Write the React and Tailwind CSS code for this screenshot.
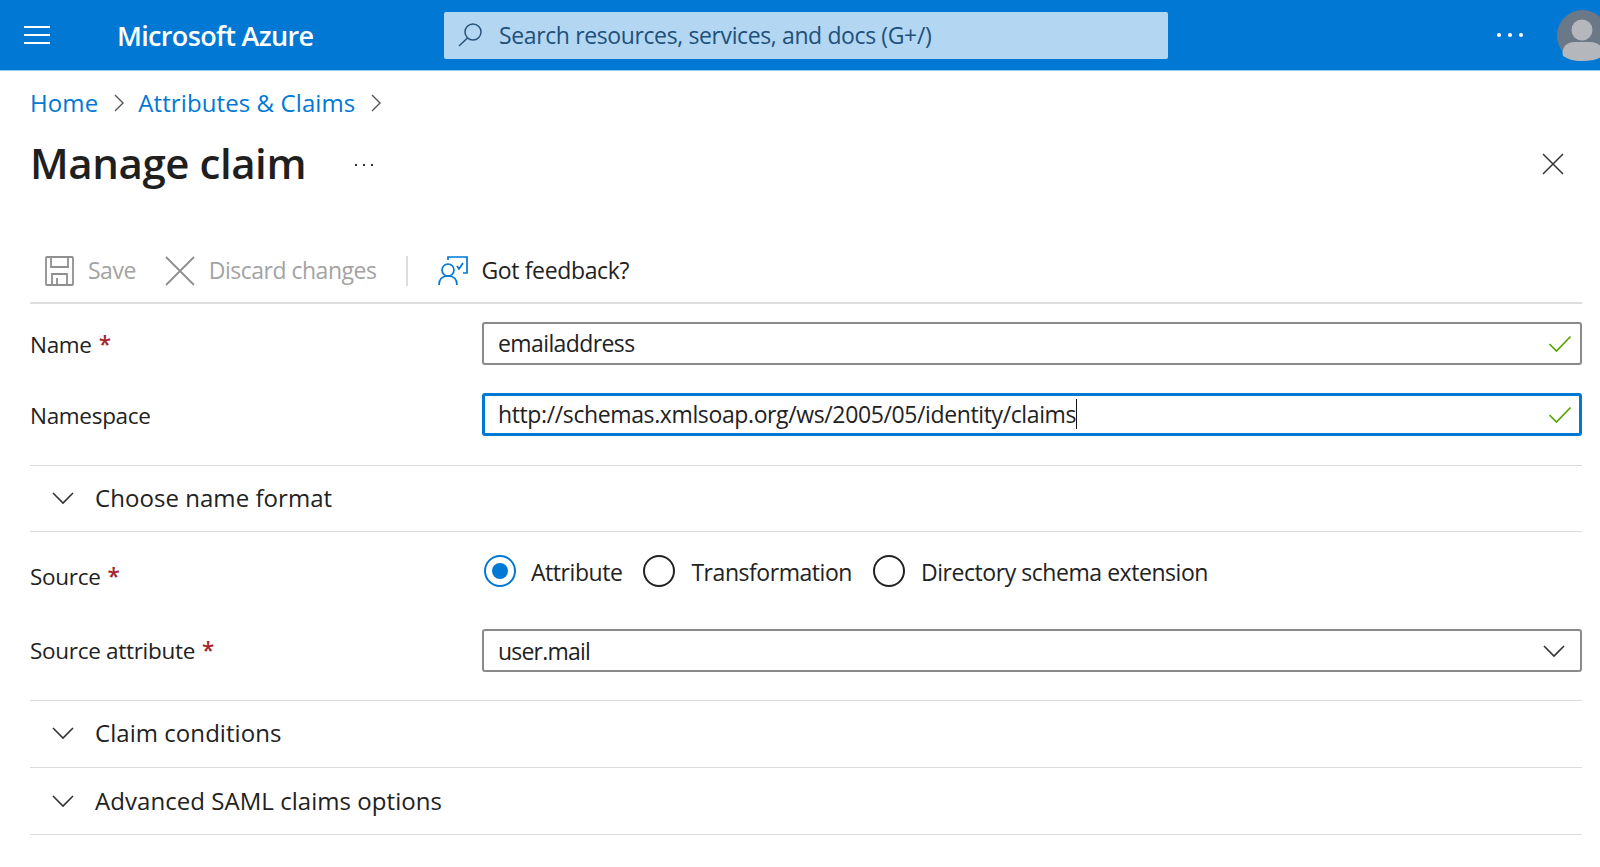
import React from "react";

const font = "font-['Open_Sans','Noto_Sans',sans-serif]";

function Chevron() {
  return (
    <svg width="24" height="14" viewBox="0 0 24 14" fill="none" stroke="#333" strokeWidth="1.6" className="shrink-0">
      <path d="M2 2l10 10L22 2" />
    </svg>
  );
}

function Section({ title, className = "" }) {
  return (
    <div className={`flex items-center gap-[20px] border-b border-[#dcdcdc] pl-[21px] ${className}`}>
      <Chevron />
      <span className="text-[24px] tracking-[0.05px] text-[#222]">{title}</span>
    </div>
  );
}

function Label({ text, req }) {
  return (
    <span className="text-[22.5px] tracking-[-0.3px] text-[#222]">
      {text}
      {req && <span className="ml-[7px] font-semibold text-[#a4262c]">*</span>}
    </span>
  );
}

function Check() {
  return (
    <svg width="24" height="18" viewBox="0 0 24 18" fill="none" stroke="#57a300" strokeWidth="1.7" className="shrink-0">
      <path d="M1.5 9l7 7L22.5 1.5" />
    </svg>
  );
}

function Radio({ label, on, className = "" }) {
  return (
    <div className={`flex items-center ${on ? "gap-[15px]" : "gap-[16px]"} ${className}`}>
      <span className={`mb-[2px] flex h-[32px] w-[32px] items-center justify-center rounded-full border-2 ${on ? "border-[#0078d4]" : "border-[#222]"}`}>
        {on && <span className="h-[16px] w-[16px] rounded-full bg-[#0078d4]" />}
      </span>
      <span className="text-[23px] tracking-[-0.45px] text-[#222]">{label}</span>
    </div>
  );
}

export default function App() {
  return (
    <div className={`${font} h-[867px] w-[1600px] overflow-hidden bg-white`}>
      <header className="flex h-[71px] items-center border-b border-[#9cc8ee] bg-[#0078d4]">
        <svg width="26" height="18" viewBox="0 0 26 18" stroke="#fff" strokeWidth="2" className="mb-[1px] ml-[24px] shrink-0">
          <path d="M0 1h26M0 9h26M0 17h26" />
        </svg>
        <span className="ml-[67px] w-[327px] pt-[3px] text-[27px] font-semibold tracking-[-0.65px] text-white">Microsoft Azure</span>
        <div className="flex h-[47px] w-[724px] items-center gap-[16px] rounded-[2px] bg-[#b3d7f2] pl-[13px]">
          <svg width="26" height="26" viewBox="0 0 26 26" fill="none" stroke="#27527a" strokeWidth="1.5" className="shrink-0">
            <circle cx="16" cy="10" r="8" />
            <path d="M10.500 16L2 24" />
          </svg>
          <span className="text-[23px] tracking-[-0.38px] text-[#21507a]">Search resources, services, and docs (G+/)</span>
        </div>
        <div className="ml-[329px] flex gap-[7px]">
          <span className="h-[4px] w-[4px] rounded-full bg-white" />
          <span className="h-[4px] w-[4px] rounded-full bg-white" />
          <span className="h-[4px] w-[4px] rounded-full bg-white" />
        </div>
        <div className="ml-[34px] flex-1 overflow-hidden">
          <svg width="50" height="51" viewBox="0 0 50 51" className="block">
            <circle cx="25.500" cy="25.500" r="25.500" fill="#6b7887" />
            <circle cx="25" cy="20" r="10.500" fill="#b4b8bc" />
            <path d="M6 46c-2-8 3-14 12-14h15c9 0 15 6 13 14-5 3.500-12 5-21 5s-14-2-19-5z" fill="#b4b8bc" />
          </svg>
        </div>
      </header>

      <main className="px-[30px] pr-[18px]">
        <nav className="flex h-[64px] items-center text-[24px] tracking-[0.1px] text-[#0078d4]">
          <span>Home</span>
          <svg width="11" height="18" viewBox="0 0 11 18" fill="none" stroke="#555" strokeWidth="1.4" className="ml-[16px] mr-[13px]"><path d="M1 1l8 8-8 8" /></svg>
          <span>Attributes &amp; Claims</span>
          <svg width="11" height="18" viewBox="0 0 11 18" fill="none" stroke="#555" strokeWidth="1.4" className="ml-[16px]"><path d="M1 1l8 8-8 8" /></svg>
        </nav>

        <div className="flex h-[55px] items-center">
          <h1 className="text-[42px] font-semibold tracking-[-0.43px] text-[#1f1f1f]">Manage claim</h1>
          <div className="ml-[49px] mt-[4px] flex gap-[6px]">
            <span className="h-[2px] w-[2px] bg-[#333]" />
            <span className="h-[2px] w-[2px] bg-[#333]" />
            <span className="h-[2px] w-[2px] bg-[#333]" />
          </div>
          <svg width="22" height="22" viewBox="0 0 22 22" stroke="#333" strokeWidth="1.5" className="ml-auto mr-[18px] mt-[2px]">
            <path d="M1 1l20 20M21 1L1 21" />
          </svg>
        </div>

        <div className="mt-[52px] flex h-[62px] items-center border-b-2 border-[#dedede] pb-[3px] pl-[15px]">
          <svg width="29" height="30" viewBox="0 0 29 30" fill="none" stroke="#8f8f8f" strokeWidth="1.8">
            <path d="M2 1h25a1 1 0 011 1v26a1 1 0 01-1 1H2a1 1 0 01-1-1V2a1 1 0 011-1z" />
            <path d="M6 1v10h17V1M7 29V18h15v11M12 22v7" />
          </svg>
          <span className="ml-[14px] text-[23px] tracking-[-0.5px] text-[#a3a3a3]">Save</span>
          <svg width="30" height="30" viewBox="0 0 30 30" stroke="#8f8f8f" strokeWidth="1.8" className="ml-[29px]">
            <path d="M1 1l28 28M29 1L1 29" />
          </svg>
          <span className="ml-[14px] text-[23px] tracking-[-0.5px] text-[#a3a3a3]">Discard changes</span>
          <span className="ml-[30px] h-[30px] w-[2px] bg-[#dedede]" />
          <svg width="30" height="30" viewBox="0 0 30 30" fill="none" stroke="#0078d4" strokeWidth="1.7" className="ml-[30px]">
            <path d="M10 4V1h19v16h-4" />
            <path d="M19 10l2 3 4-6" />
            <circle cx="10" cy="14" r="6" />
            <path d="M1 29c0-6 3-9 9-9s9 3 9 9" />
          </svg>
          <span className="ml-[13px] text-[23px] tracking-[-0.35px] text-[#222]">Got feedback?</span>
        </div>

        <div className="mt-[18px] flex h-[43px] items-center">
          <div className="w-[452px] pt-[2px]"><Label text="Name" req /></div>
          <div className="flex h-full flex-1 items-center justify-between rounded-[3px] border-2 border-[#8a8a8a] pl-[14px] pr-[8px]">
            <span className="text-[23px] tracking-[-0.6px] text-[#222]">emailaddress</span>
            <Check />
          </div>
        </div>

        <div className="mt-[28px] flex h-[43px] items-center">
          <div className="w-[452px] pt-[2px]"><Label text="Namespace" /></div>
          <div className="flex h-full flex-1 items-center justify-between rounded-[3px] border-[3px] border-[#0078d4] pl-[13px] pr-[7px]">
            <span className="mb-[2px] border-r border-[#111] text-[23px] leading-[30px] tracking-[-0.38px] text-[#222]">http://schemas.xmlsoap.org/ws/2005/05/identity/claims</span>
            <Check />
          </div>
        </div>

        <div className="mt-[29px] border-t border-[#dcdcdc]">
          <Section title="Choose name format" className="h-[66px] pb-[2px]" />
        </div>

        <div className="mt-[22px] flex h-[36px] items-center">
          <div className="w-[452px] pt-[10px]"><Label text="Source" req /></div>
          <div className="flex items-center">
            <Radio label="Attribute" on className="ml-[2px]" />
            <Radio label="Transformation" className="ml-[21px]" />
            <Radio label="Directory schema extension" className="ml-[21px]" />
          </div>
        </div>

        <div className="mt-[39px] flex h-[43px] items-center">
          <div className="w-[452px]"><Label text="Source attribute" req /></div>
          <div className="flex h-full flex-1 items-center justify-between rounded-[3px] border-2 border-[#8a8a8a] pl-[14px] pr-[14px]">
            <span className="pt-[2px] text-[23px] tracking-[-0.8px] text-[#222]">user.mail</span>
            <Chevron />
          </div>
        </div>

        <div className="mt-[28px] border-t border-[#dcdcdc]">
          <Section title="Claim conditions" className="h-[67px] pb-[2px]" />
          <Section title="Advanced SAML claims options" className="h-[67px]" />
        </div>
      </main>
    </div>
  );
}
